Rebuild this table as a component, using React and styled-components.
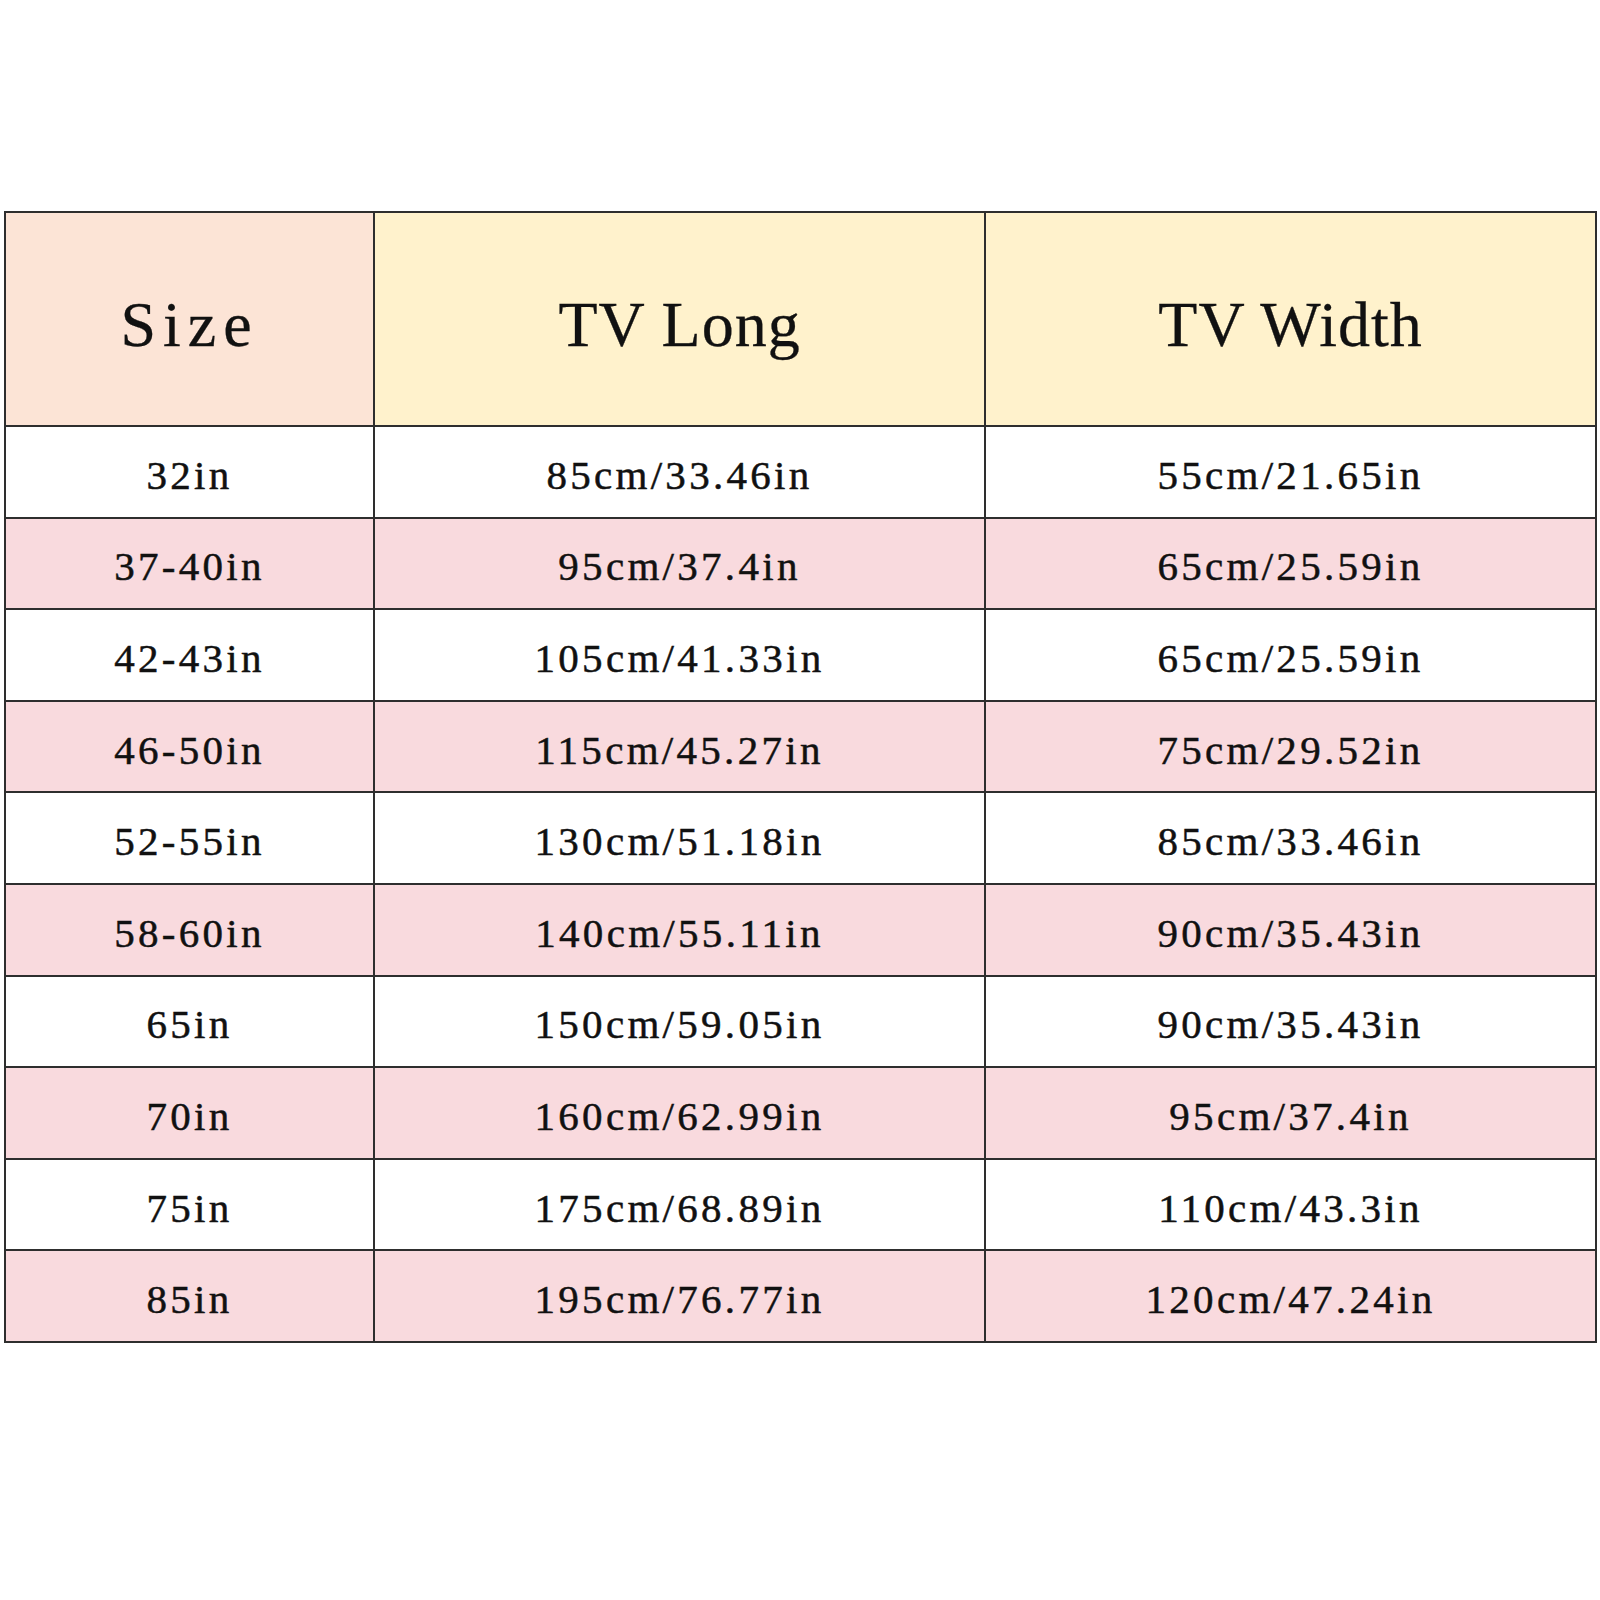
import React from "react";
import styled, { createGlobalStyle } from "styled-components";

const Global = createGlobalStyle`
  html, body { margin: 0; padding: 0; background: #ffffff; }
  body { font-family: "Liberation Serif", "Times New Roman", serif; color: #111; }
`;

const Page = styled.div`
  width: 1600px;
  height: 1600px;
  padding: 211px 0 0 4px;
  box-sizing: border-box;
`;

const Table = styled.table`
  border-collapse: collapse;
  width: 1591px;
  table-layout: fixed;
`;

const Col = styled.col`
  width: ${(p) => p.$w}px;
`;

const HeadCell = styled.th`
  height: 200px;
  border: 2px solid #2e2e2e;
  background: ${(p) => p.$bg};
  font-weight: normal;
  font-size: 64px;
  letter-spacing: ${(p) => p.$ls}px;
  text-align: center;
  vertical-align: middle;
  padding: 12px 0 0 0;
  color: #111;
  -webkit-text-stroke: 0.3px #111;
`;

const Row = styled.tr`
  background: ${(p) => (p.$alt ? "#f9dade" : "#ffffff")};
`;

const Cell = styled.td`
  height: 83.6px;
  border: 2px solid #2e2e2e;
  font-size: 41px;
  letter-spacing: 3.3px;
  text-align: center;
  vertical-align: middle;
  padding: 6px 0 0 0;
  color: #111;
  -webkit-text-stroke: 0.5px #111;
`;

const rows = [
  ["32in", "85cm/33.46in", "55cm/21.65in"],
  ["37-40in", "95cm/37.4in", "65cm/25.59in"],
  ["42-43in", "105cm/41.33in", "65cm/25.59in"],
  ["46-50in", "115cm/45.27in", "75cm/29.52in"],
  ["52-55in", "130cm/51.18in", "85cm/33.46in"],
  ["58-60in", "140cm/55.11in", "90cm/35.43in"],
  ["65in", "150cm/59.05in", "90cm/35.43in"],
  ["70in", "160cm/62.99in", "95cm/37.4in"],
  ["75in", "175cm/68.89in", "110cm/43.3in"],
  ["85in", "195cm/76.77in", "120cm/47.24in"],
];

export default function App() {
  return (
    <Page>
      <Global />
      <Table>
        <colgroup>
          <Col $w={369} />
          <Col $w={611} />
          <Col $w={611} />
        </colgroup>
        <thead>
          <tr>
            <HeadCell $bg="#fce4d6" $ls={7}>Size</HeadCell>
            <HeadCell $bg="#fff2cc" $ls={1}>TV Long</HeadCell>
            <HeadCell $bg="#fff2cc" $ls={1}>TV Width</HeadCell>
          </tr>
        </thead>
        <tbody>
          {rows.map((r, i) => (
            <Row key={i} $alt={i % 2 === 1}>
              {r.map((c, j) => (
                <Cell key={j}>{c}</Cell>
              ))}
            </Row>
          ))}
        </tbody>
      </Table>
    </Page>
  );
}
